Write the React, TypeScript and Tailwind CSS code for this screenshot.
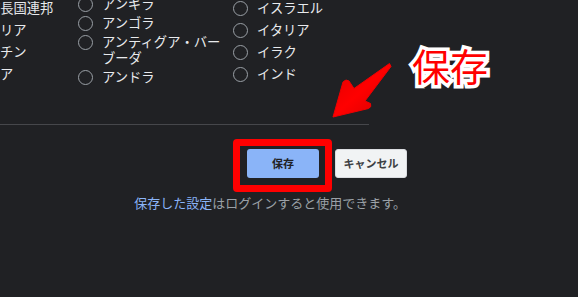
import React from "react";

const colOne = ["アラブ首長国連邦", "アルジェリア", "アルゼンチン", "アルメニア"];
const colTwo = ["アンギラ", "アンゴラ", "アンティグア・バー\nブーダ", "アンドラ"];
const colThree = ["イスラエル", "イタリア", "イラク", "インド"];

function Radio({ top }: { top: string }) {
  return (
    <span
      className={`shrink-0 w-[15px] h-[15px] rounded-full border-[1.5px] border-[#9aa0a6] ${top}`}
    />
  );
}

function WideList({ items }: { items: string[] }) {
  // rows on a 22px pitch
  return (
    <div className="w-[155px] -mt-[3px] flex flex-col">
      {items.map((name) => (
        <div key={name} className="flex items-start gap-[9px] leading-[22px]">
          <Radio top="mt-[3.5px]" />
          <span className="whitespace-nowrap">{name}</span>
        </div>
      ))}
    </div>
  );
}

function TightList({ items }: { items: string[] }) {
  return (
    <div className="w-[155px] -mt-[4px] flex flex-col gap-[3px]">
      {items.map((name) => (
        <div key={name} className="flex items-start gap-[9px] leading-[16px]">
          <Radio top="mt-[0.5px]" />
          <span className="whitespace-pre-line">{name}</span>
        </div>
      ))}
    </div>
  );
}

export default function App() {
  return (
    <div className="relative w-[578px] h-[297px] overflow-hidden bg-[#202124] text-[#e8eaed] font-['Noto_Sans_CJK_JP','Noto_Sans',sans-serif]">
      {/* country list, left edge is cut off */}
      <div className="flex items-start h-[124px] -ml-[77px] text-[13.3px]">
        <WideList items={colOne} />
        <TightList items={colTwo} />
        <WideList items={colThree} />
      </div>

      <div className="h-px w-[369px] bg-[#46474b]" />

      <div className="w-[407px] mt-[24px] flex justify-end gap-[16px]">
        <button className="w-[72px] h-[29px] rounded-[3px] bg-[#8ab4f8] text-[#202124] text-[11px] font-bold">
          保存
        </button>
        <button className="w-[72px] h-[29px] rounded-[3px] bg-[#f1f3f4] border border-[#dadce0] text-[#3c4043] text-[11px] font-bold">
          キャンセル
        </button>
      </div>

      <p className="w-[406px] mt-[16px] text-right text-[13px] leading-[18px] text-[#9aa0a6]">
        <span className="text-[#8ab4f8]">保存した設定</span>はログインすると使用できます。
      </p>

      {/* annotation layer */}
      <div className="absolute left-[233px] top-[139px] w-[99px] h-[53px] border-[7px] border-[#ff0000] rounded-[4px]" />

      <svg className="absolute left-0 top-0" width="578" height="297" viewBox="0 0 578 297">
        <defs>
          <linearGradient id="arw" x1="0" y1="0" x2="1" y2="1">
            <stop offset="0" stopColor="#e00000" />
            <stop offset="0.5" stopColor="#ff0000" />
            <stop offset="1" stopColor="#d40000" />
          </linearGradient>
        </defs>
        <path
          d="M389.5 63.5 L391 66.5 L365 101 L370.5 103.5 Q372 107 368.5 108.5 L333 117 L343 82 Q346 78.5 349 81 L354 88.5 Z"
          fill="url(#arw)"
          stroke="#ee0000"
          strokeWidth="1"
          strokeLinejoin="round"
        />
      </svg>

      <div className="absolute left-[412px] top-[44px] text-[38px] leading-[42px] font-normal text-[#ff0000] [-webkit-text-stroke:7px_white] [paint-order:stroke_fill]">
        保存
      </div>
    </div>
  );
}
